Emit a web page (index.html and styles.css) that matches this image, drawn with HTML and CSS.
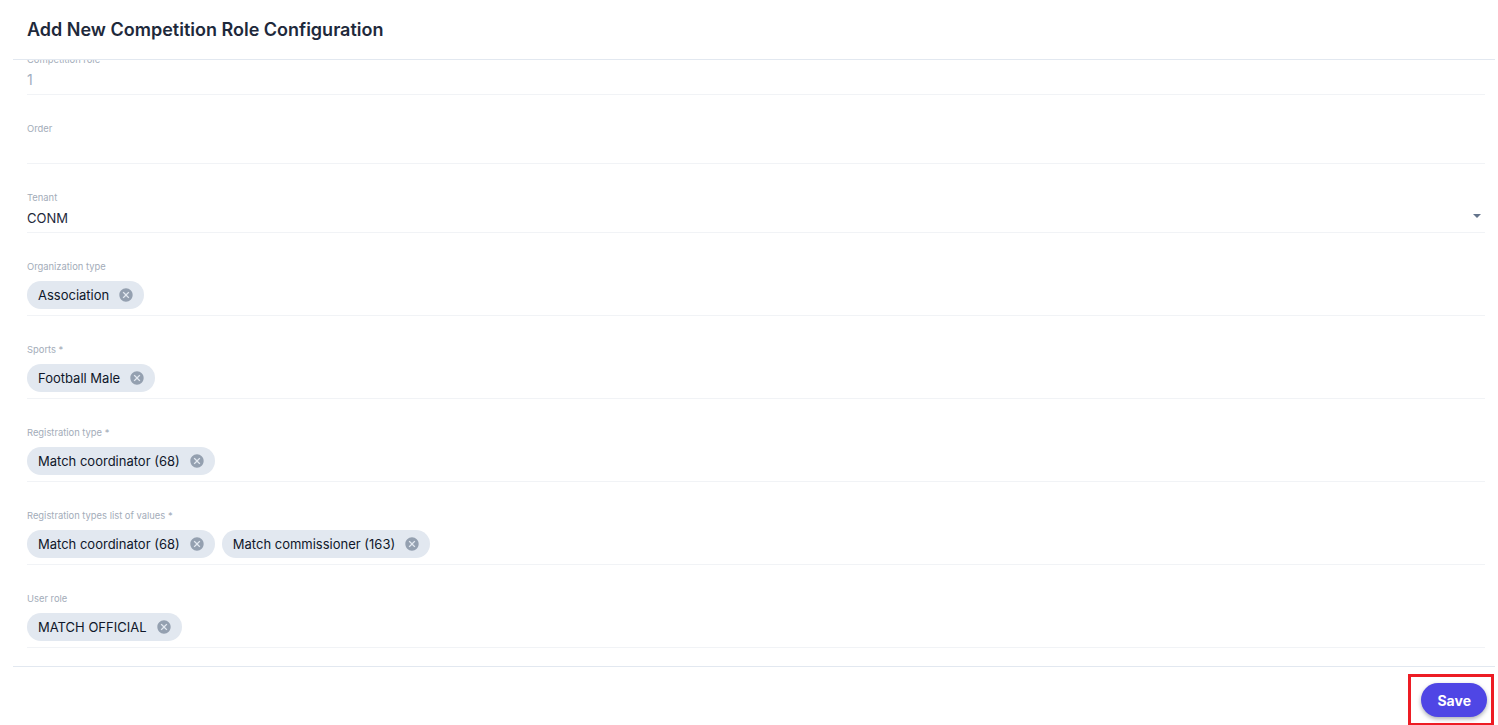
FILE: index.html
```html
<!DOCTYPE html>
<html lang="en">
<head>
<meta charset="utf-8">
<title>Add New Competition Role Configuration</title>
<link rel="stylesheet" href="styles.css">
</head>
<body>
<div class="page">
  <header class="header">
    <h1 class="title">Add New Competition Role Configuration</h1>
  </header>
  <main class="body">
    <div class="form">
      <div class="field">
        <div class="label">Competition role</div>
        <div class="value value-disabled">1</div>
      </div>
      <div class="field">
        <div class="label">Order</div>
        <div class="value"></div>
      </div>
      <div class="field">
        <div class="label">Tenant</div>
        <div class="value value-select"><span>CONM</span><span class="arrow"></span></div>
      </div>
      <div class="field">
        <div class="label">Organization type</div>
        <div class="chips">
          <span class="chip"><span class="chip-label">Association</span><svg class="chip-del" viewBox="0 0 24 24"><path d="M12 2C6.47 2 2 6.47 2 12s4.47 10 10 10 10-4.47 10-10S17.53 2 12 2zm5 13.59L15.59 17 12 13.41 8.41 17 7 15.59 10.59 12 7 8.41 8.41 7 12 10.59 15.59 7 17 8.41 13.41 12 17 15.59z"/></svg></span>
        </div>
      </div>
      <div class="field">
        <div class="label">Sports *</div>
        <div class="chips">
          <span class="chip"><span class="chip-label">Football Male</span><svg class="chip-del" viewBox="0 0 24 24"><path d="M12 2C6.47 2 2 6.47 2 12s4.47 10 10 10 10-4.47 10-10S17.53 2 12 2zm5 13.59L15.59 17 12 13.41 8.41 17 7 15.59 10.59 12 7 8.41 8.41 7 12 10.59 15.59 7 17 8.41 13.41 12 17 15.59z"/></svg></span>
        </div>
      </div>
      <div class="field">
        <div class="label">Registration type *</div>
        <div class="chips">
          <span class="chip"><span class="chip-label">Match coordinator (68)</span><svg class="chip-del" viewBox="0 0 24 24"><path d="M12 2C6.47 2 2 6.47 2 12s4.47 10 10 10 10-4.47 10-10S17.53 2 12 2zm5 13.59L15.59 17 12 13.41 8.41 17 7 15.59 10.59 12 7 8.41 8.41 7 12 10.59 15.59 7 17 8.41 13.41 12 17 15.59z"/></svg></span>
        </div>
      </div>
      <div class="field">
        <div class="label">Registration types list of values *</div>
        <div class="chips">
          <span class="chip"><span class="chip-label">Match coordinator (68)</span><svg class="chip-del" viewBox="0 0 24 24"><path d="M12 2C6.47 2 2 6.47 2 12s4.47 10 10 10 10-4.47 10-10S17.53 2 12 2zm5 13.59L15.59 17 12 13.41 8.41 17 7 15.59 10.59 12 7 8.41 8.41 7 12 10.59 15.59 7 17 8.41 13.41 12 17 15.59z"/></svg></span>
          <span class="chip"><span class="chip-label">Match commissioner (163)</span><svg class="chip-del" viewBox="0 0 24 24"><path d="M12 2C6.47 2 2 6.47 2 12s4.47 10 10 10 10-4.47 10-10S17.53 2 12 2zm5 13.59L15.59 17 12 13.41 8.41 17 7 15.59 10.59 12 7 8.41 8.41 7 12 10.59 15.59 7 17 8.41 13.41 12 17 15.59z"/></svg></span>
        </div>
      </div>
      <div class="field">
        <div class="label">User role</div>
        <div class="chips">
          <span class="chip"><span class="chip-label">MATCH OFFICIAL</span><svg class="chip-del" viewBox="0 0 24 24"><path d="M12 2C6.47 2 2 6.47 2 12s4.47 10 10 10 10-4.47 10-10S17.53 2 12 2zm5 13.59L15.59 17 12 13.41 8.41 17 7 15.59 10.59 12 7 8.41 8.41 7 12 10.59 15.59 7 17 8.41 13.41 12 17 15.59z"/></svg></span>
        </div>
      </div>
    </div>
  </main>
  <footer class="footer">
    <button class="save" type="button">Save</button>
    <span class="highlight"></span>
  </footer>
</div>
</body>
</html>
```

FILE: styles.css
```css
* { box-sizing: border-box; }

html, body {
  margin: 0;
  padding: 0;
  background: #ffffff;
  font-family: Inter, "Noto Sans", "Liberation Sans", sans-serif;
  color: #1e293b;
  overflow: hidden;
}

.page {
  margin-left: 13px;
  width: 1482px;
  height: 725px;
  display: flex;
  flex-direction: column;
}

.header {
  height: 60px;
  padding: 18px 0 0 14px;
  border-bottom: 1px solid #e2e8f0;
  flex: none;
}

.title {
  margin: 0;
  font-size: 18px;
  line-height: 24px;
  font-weight: 600;
  color: #1e293b;
}

.body {
  height: 606px;
  flex: none;
  overflow: hidden;
  padding: 0 10px 0 14px;
}

.form {
  margin-top: -34px;
}

.field {
  padding-top: 28px;
  border-bottom: 1px solid #f1f3f6;
}

.label {
  font-size: 9.4px;
  line-height: 12px;
  color: #a3acb9;
}

.value {
  margin-top: 4px;
  height: 24px;
  padding-bottom: 4px;
  font-size: 13px;
  line-height: 20px;
  color: #1e293b;
}

.value-disabled {
  color: #a0aec0;
  font-size: 14px;
}

.value-select {
  display: flex;
  justify-content: space-between;
  align-items: center;
}

.arrow {
  width: 0;
  height: 0;
  border-left: 4px solid transparent;
  border-right: 4px solid transparent;
  border-top: 4px solid #64748b;
  margin-right: 4px;
  margin-bottom: 4px;
}

.chips {
  margin-top: 8px;
  padding-bottom: 6px;
  display: flex;
  gap: 7px;
}

.chip {
  height: 28px;
  border-radius: 14px;
  background: #e2e8f0;
  display: inline-flex;
  align-items: center;
  padding: 0 10px 0 11px;
}

.chip-label {
  font-size: 13px;
  line-height: 20px;
  color: #0f172a;
  padding-right: 9px;
  white-space: nowrap;
}

.chip-del {
  width: 16px;
  height: 16px;
  fill: #94a0b0;
  flex: none;
}

.footer {
  flex: 1;
  position: relative;
  border-top: 1px solid #e2e8f0;
  display: flex;
  justify-content: flex-end;
  align-items: flex-start;
  padding: 16px 8px 0 0;
}

.save {
  height: 34px;
  padding: 0 16px;
  border: none;
  border-radius: 17px;
  background: #4f46e5;
  color: #ffffff;
  font-family: Inter, "Noto Sans", "Liberation Sans", sans-serif;
  font-size: 14px;
  font-weight: 700;
  box-shadow: 0 2px 4px rgba(15, 23, 42, 0.35);
  cursor: pointer;
}

.highlight {
  position: absolute;
  left: 1395px;
  top: 7px;
  width: 86px;
  height: 52px;
  border: 3px solid #ed1c24;
  pointer-events: none;
}
```
